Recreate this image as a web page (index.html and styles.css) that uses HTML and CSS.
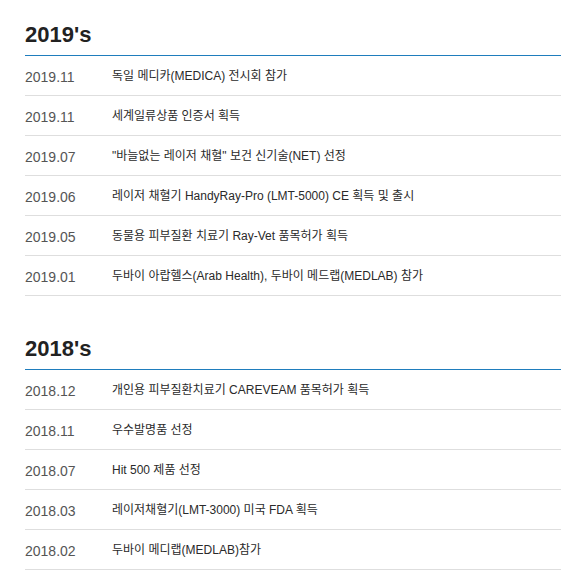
FILE: index.html
```html
<!DOCTYPE html>
<html lang="ko">
<head>
<meta charset="utf-8">
<link rel="stylesheet" href="styles.css">
</head>
<body>
<div class="history">
  <section class="decade">
    <h2 class="decade-title">2019's</h2>
    <ul class="events">
      <li class="event"><span class="date">2019.11</span><span class="desc">독일 메디카(MEDICA) 전시회 참가</span></li>
      <li class="event"><span class="date">2019.11</span><span class="desc">세계일류상품 인증서 획득</span></li>
      <li class="event"><span class="date">2019.07</span><span class="desc">"바늘없는 레이저 채혈" 보건 신기술(NET) 선정</span></li>
      <li class="event"><span class="date">2019.06</span><span class="desc">레이저 채혈기 HandyRay-Pro (LMT-5000) CE 획득 및 출시</span></li>
      <li class="event"><span class="date">2019.05</span><span class="desc">동물용 피부질환 치료기 Ray-Vet 품목허가 획득</span></li>
      <li class="event"><span class="date">2019.01</span><span class="desc">두바이 아랍헬스(Arab Health), 두바이 메드랩(MEDLAB) 참가</span></li>
    </ul>
  </section>
  <section class="decade">
    <h2 class="decade-title">2018's</h2>
    <ul class="events">
      <li class="event"><span class="date">2018.12</span><span class="desc">개인용 피부질환치료기 CAREVEAM 품목허가 획득</span></li>
      <li class="event"><span class="date">2018.11</span><span class="desc">우수발명품 선정</span></li>
      <li class="event"><span class="date">2018.07</span><span class="desc">Hit 500 제품 선정</span></li>
      <li class="event"><span class="date">2018.03</span><span class="desc">레이저채혈기(LMT-3000) 미국 FDA 획득</span></li>
      <li class="event"><span class="date">2018.02</span><span class="desc">두바이 메디랩(MEDLAB)참가</span></li>
    </ul>
  </section>
</div>
</body>
</html>
```

FILE: styles.css
```css
html, body {
  margin: 0;
  padding: 0;
  background: #fff;
}

body {
  font-family: "Liberation Sans", "Noto Sans CJK KR", sans-serif;
  color: #222;
}

.history {
  padding: 21px 0 0 25px;
}

.decade + .decade {
  margin-top: 39px;
}

.decade-title {
  margin: 0;
  padding-bottom: 6px;
  font-size: 22px;
  line-height: 28px;
  font-weight: bold;
  color: #222;
  border-bottom: 1px solid #1f7dbd;
}

.events {
  list-style: none;
  margin: 0;
  padding: 0;
}

.event {
  display: flex;
  align-items: center;
  height: 40px;
  box-sizing: border-box;
  border-bottom: 1px solid #dedede;
}

.date {
  flex: 0 0 87px;
  font-size: 14px;
  line-height: 16px;
  padding-top: 3px;
  color: #555;
}

.desc {
  font-size: 12px;
  line-height: 16px;
  color: #2a2a2a;
}
```
